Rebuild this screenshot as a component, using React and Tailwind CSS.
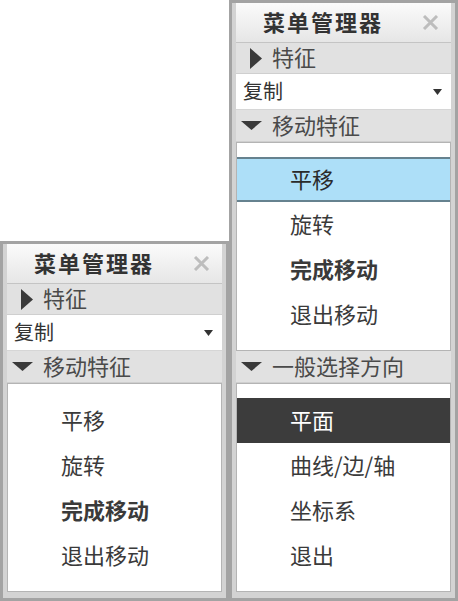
import React from "react";

// 列表项
const moveItems = [
  { t: "平移", hl: "blue" },
  { t: "旋转" },
  { t: "完成移动", bold: true },
  { t: "退出移动" },
];

const dirItems = [
  { t: "平面", hl: "dark" },
  { t: "曲线/边/轴" },
  { t: "坐标系" },
  { t: "退出" },
];

function Header() {
  return (
    <div className="h-[40px] flex items-center border-b border-[#c4c4c4] bg-gradient-to-b from-[#fbfbfb] to-[#e6e6e6]">
      <span className="pl-[27px] pb-[3px] text-[22px] font-bold tracking-[2px] text-[#333]">菜单管理器</span>
      <svg className="ml-auto mr-[12px]" width="17" height="15" viewBox="0 0 17 15">
        <path d="M2 1 L15 14 M15 1 L2 14" stroke="#bdbdbd" strokeWidth="3" />
      </svg>
    </div>
  );
}

function GrayRow({ open, label, h }) {
  return (
    <div className={"flex items-center bg-[#e1e1e1] border-b border-[#cfcfcf] " + h}>
      {open ? (
        <svg className="ml-[5px] mr-[10px]" width="21" height="9" viewBox="0 0 21 9">
          <polygon points="0,0 21,0 10.5,9" fill="#3a3a3a" />
        </svg>
      ) : (
        <svg className="ml-[14px] mr-[10px]" width="12" height="21" viewBox="0 0 12 21">
          <polygon points="0,0 12,10.5 0,21" fill="#3a3a3a" />
        </svg>
      )}
      <span className="pb-[3px] text-[22px] text-[#4a4a4a]">{label}</span>
    </div>
  );
}

function CopyRow() {
  return (
    <div className="h-[36px] flex items-center bg-white border-b border-[#d6d6d6]">
      <span className="pl-[7px] pb-[2px] text-[20px] text-[#333]">复制</span>
      <svg className="ml-auto mr-[9px]" width="9" height="6" viewBox="0 0 9 6">
        <polygon points="0,0 9,0 4.5,6" fill="#333" />
      </svg>
    </div>
  );
}

function ListBox({ items }) {
  return (
    <div className="h-[209px] bg-white border border-[#b4b4b4] pt-[14px]">
      {items.map((it) => {
        let cls = "h-[45px] flex items-center pl-[53px] pb-[3px] text-[22px] ";
        if (it.hl === "blue") cls += "bg-[#addff8] border-y-2 border-[#66828f] text-[#2a2a2a]";
        else if (it.hl === "dark") cls += "bg-[#3c3c3c] text-white";
        else cls += "text-[#3a3a3a]";
        if (it.bold) cls += " font-bold";
        return (
          <div key={it.t} className={cls}>
            {it.t}
          </div>
        );
      })}
    </div>
  );
}

function Panel({ children }) {
  return (
    <div className="w-[229px] border-[3px] border-[#a3a3a3] bg-[#d3d3d3] px-[4px] pb-[6px]">
      {children}
    </div>
  );
}

export default function App() {
  return (
    <div className="flex items-end w-[458px] h-[601px] bg-white font-['Noto_Sans_CJK_SC','Liberation_Sans',sans-serif]">
      <Panel>
        <Header />
        <GrayRow label="特征" h="h-[31px]" />
        <CopyRow />
        <GrayRow open label="移动特征" h="h-[32px]" />
        <ListBox items={moveItems.map((i) => ({ ...i, hl: undefined }))} />
      </Panel>
      <Panel>
        <Header />
        <GrayRow label="特征" h="h-[31px]" />
        <CopyRow />
        <GrayRow open label="移动特征" h="h-[32px]" />
        <ListBox items={moveItems} />
        <GrayRow open label="一般选择方向" h="h-[32px]" />
        <ListBox items={dirItems} />
      </Panel>
    </div>
  );
}
